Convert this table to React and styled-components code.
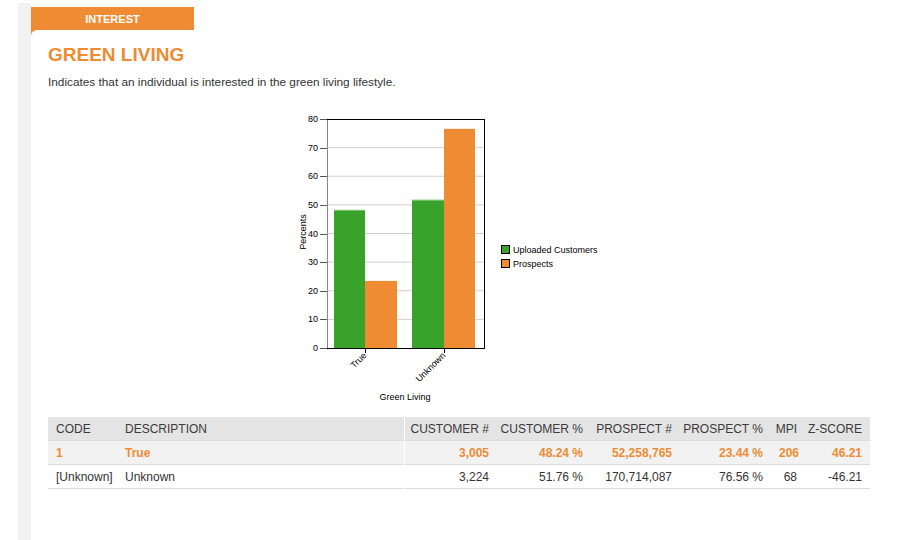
import React from "react";
import styled, { createGlobalStyle } from "styled-components";

const ORANGE = "#EE8B33";
const GREEN = "#38A22A";

const Global = createGlobalStyle`
  html, body { margin: 0; padding: 0; background: #fff; }
  body { font-family: "Liberation Sans", Arial, sans-serif; color: #333; }
`;

const Page = styled.div`
  display: flex;
  padding: 3px 0 0 18px;
  min-height: 540px;
  box-sizing: border-box;
`;

const Strip = styled.div`
  width: 13px;
  background: #f2f2f2;
  flex-shrink: 0;
`;

const Card = styled.div`
  flex: 1;
  margin-top: 4px;
  display: flex;
  flex-direction: column;
  background: linear-gradient(${ORANGE}, ${ORANGE}) no-repeat 0 0 / 10px 40px, #fff;
`;

const Tab = styled.div`
  width: 163px;
  height: 23px;
  background: ${ORANGE};
  border-top-left-radius: 5px;
  color: #fff;
  font-weight: bold;
  font-size: 11px;
  display: flex;
  align-items: center;
  justify-content: center;
`;

const Body = styled.div`
  flex: 1;
  background: #fff;
  border-top-left-radius: 6px;
  padding: 14px 0 0 17px;
`;

const Title = styled.h1`
  margin: 0;
  font-size: 19px;
  line-height: 22px;
  font-weight: bold;
  color: ${ORANGE};
`;

const Desc = styled.p`
  margin: 9px 0 0;
  font-size: 11.8px;
  line-height: 14px;
  color: #333;
`;

const ChartWrap = styled.div`
  margin: 21px 0 0 242px;
  height: 295px;
  svg { display: block; }
`;

const Table = styled.table`
  margin-top: 12px;
  width: 822px;
  table-layout: fixed;
  border-collapse: collapse;
  font-size: 12px;
`;

const Th = styled.th`
  background: #e4e4e4;
  height: 23px;
  padding: ${(p) => (p.$right ? "0 8px 0 0" : "0 8px")};
  font-weight: normal;
  color: #3a3a3a;
  text-align: ${(p) => (p.$right ? "right" : "left")};
  white-space: nowrap;
  border-left: ${(p) => (p.$split ? "1px solid #fff" : "none")};
`;

const Tr = styled.tr`
  background: ${(p) => (p.$hl ? "#f2f2f2" : "#fff")};
  border-top: 1px solid #dcdcdc;
  border-bottom: 1px solid #dcdcdc;
`;

const Td = styled.td`
  height: 23px;
  padding: 0 8px;
  text-align: ${(p) => (p.$right ? "right" : "left")};
  color: ${(p) => (p.$hl ? ORANGE : "#333")};
  font-weight: ${(p) => (p.$hl ? "bold" : "normal")};
  white-space: nowrap;
  border-left: ${(p) => (p.$split ? "1px solid #fff" : "none")};
`;

const cols = [69, 287, 93, 94, 89, 91, 34, 65];
const headers = [
  "CODE",
  "DESCRIPTION",
  "CUSTOMER #",
  "CUSTOMER %",
  "PROSPECT #",
  "PROSPECT %",
  "MPI",
  "Z-SCORE",
];
const rows = [
  { hl: true, cells: ["1", "True", "3,005", "48.24 %", "52,258,765", "23.44 %", "206", "46.21"] },
  { hl: false, cells: ["[Unknown]", "Unknown", "3,224", "51.76 %", "170,714,087", "76.56 %", "68", "-46.21"] },
];

const L = 37, R = 194, T = 9, B = 238;
const sc = (B - T) / 80;
const y = (v) => B - v * sc;

function Chart() {
  const bars = [
    { x: 44, w: 31, v: 48.24, c: GREEN, hi: "#7cc56e" },
    { x: 75, w: 32, v: 23.44, c: ORANGE },
    { x: 122, w: 32, v: 51.76, c: GREEN, hi: "#7cc56e" },
    { x: 154, w: 31, v: 76.56, c: ORANGE },
  ];
  const ticks = [0, 10, 20, 30, 40, 50, 60, 70, 80];
  const f = { fontFamily: "'Liberation Sans', Arial, sans-serif", fontSize: 9, fill: "#000" };
  return (
    <svg width="320" height="295" viewBox="0 0 320 295">
      {ticks.slice(1, 8).map((t) => (
        <line key={t} x1={L} x2={R} y1={y(t)} y2={y(t)} stroke="#cfcfcf" strokeWidth="1" />
      ))}
      {bars.map((b, i) => (
        <g key={i}>
          <rect x={b.x} y={y(b.v)} width={b.w} height={B - y(b.v)} fill={b.c} />
          {b.hi && <rect x={b.x} y={y(b.v)} width={b.w} height={1} fill={b.hi} />}
        </g>
      ))}
      <line x1={L + 0.5} x2={L + 0.5} y1={T} y2={B} stroke="#888" />
      <line x1={L} x2={R + 0.5} y1={T + 0.5} y2={T + 0.5} stroke="#000" />
      <line x1={R + 0.5} x2={R + 0.5} y1={T} y2={B} stroke="#000" />
      <line x1={30} x2={R + 1} y1={B + 0.5} y2={B + 0.5} stroke="#000" />
      {ticks.map((t) => (
        <g key={t}>
          <line x1={30} x2={L} y1={Math.round(y(t)) + 0.5} y2={Math.round(y(t)) + 0.5} stroke="#555" />
          <text x={28} y={y(t) + 3} textAnchor="end" {...f}>
            {t}
          </text>
        </g>
      ))}
      <line x1={75.5} x2={75.5} y1={B} y2={B + 5} stroke="#000" />
      <line x1={154.5} x2={154.5} y1={B} y2={B + 5} stroke="#000" />
      <text transform="translate(77 246) rotate(-45)" textAnchor="end" {...f}>
        True
      </text>
      <text transform="translate(156 246) rotate(-45)" textAnchor="end" {...f}>
        Unknown
      </text>
      <text x={115} y={290} textAnchor="middle" {...f}>
        Green Living
      </text>
      <text transform="translate(16 122) rotate(-90)" textAnchor="middle" {...f}>
        Percents
      </text>
      <rect x={211.5} y={135.5} width={8} height={8} fill={GREEN} stroke="#000" />
      <text x={223} y={143} {...f}>
        Uploaded Customers
      </text>
      <rect x={211.5} y={149.5} width={8} height={8} fill={ORANGE} stroke="#000" />
      <text x={223} y={157} {...f}>
        Prospects
      </text>
    </svg>
  );
}

export default function App() {
  return (
    <>
      <Global />
      <Page>
        <Strip />
        <Card>
          <Tab>INTEREST</Tab>
          <Body>
            <Title>GREEN LIVING</Title>
            <Desc>Indicates that an individual is interested in the green living lifestyle.</Desc>
            <ChartWrap>
              <Chart />
            </ChartWrap>
            <Table>
              <colgroup>
                {cols.map((w, i) => (
                  <col key={i} style={{ width: w }} />
                ))}
              </colgroup>
              <thead>
                <tr>
                  {headers.map((h, i) => (
                    <Th key={h} $right={i > 1} $split={i === 2}>
                      {h}
                    </Th>
                  ))}
                </tr>
              </thead>
              <tbody>
                {rows.map((r, ri) => (
                  <Tr key={ri} $hl={r.hl}>
                    {r.cells.map((c, i) => (
                      <Td key={i} $right={i > 1} $hl={r.hl} $split={i === 2}>
                        {c}
                      </Td>
                    ))}
                  </Tr>
                ))}
              </tbody>
            </Table>
          </Body>
        </Card>
      </Page>
    </>
  );
}
